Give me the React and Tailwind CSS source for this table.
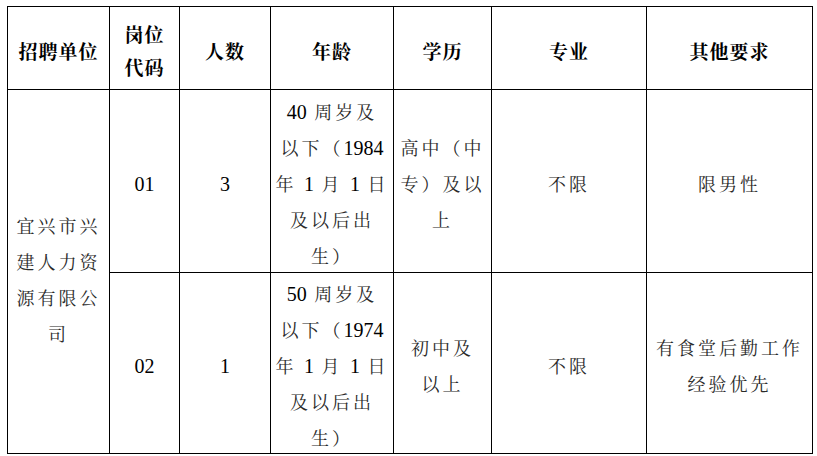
import React from "react";

const font = {
  fontFamily: '"Liberation Serif", "Noto Serif CJK SC", "Noto Sans CJK SC", serif',
};

const cols = [102, 70, 91, 123, 98, 155, 166];

const headers = [["招聘单位"], ["岗位", "代码"], ["人数"], ["年龄"], ["学历"], ["专业"], ["其他要求"]];

const rows = [
  {
    code: "01",
    count: "3",
    age: ["40 周岁及", "以下（1984", "年 1 月 1 日", "及以后出", "生）"],
    edu: ["高中（中", "专）及以", "上"],
    major: ["不限"],
    other: ["限男性"],
  },
  {
    code: "02",
    count: "1",
    age: ["50 周岁及", "以下（1974", "年 1 月 1 日", "及以后出", "生）"],
    edu: ["初中及", "以上"],
    major: ["不限"],
    other: ["有食堂后勤工作", "经验优先"],
  },
];

// digits in the Word doc are not spread by the CJK grid spacing
const Text = ({ s }) =>
  s.split(/(\d+)/).map((part, i) =>
    /^\d+$/.test(part) ? (
      <span key={i} className="tracking-normal text-[20px] leading-none text-black">
        {part}
      </span>
    ) : (
      <span key={i}>{part}</span>
    )
  );

// taller leading than box height pushes the glyphs a few px down, like Word's baseline
const Lines = ({ lines, lineClass = "h-[36px] leading-[44px]" }) => (
  <div>
    {lines.map((l, i) => (
      <div key={i} className={`whitespace-nowrap ${lineClass}`}>
        <Text s={l} />
      </div>
    ))}
  </div>
);

const cell = "border border-black text-center align-middle p-0";

export default function App() {
  return (
    <div className="bg-white w-[817px] h-[456px] pt-[6px] pl-[7px]" style={font}>
      <table className="table-fixed border-collapse w-[805px] text-[#2a2a2a]">
        <colgroup>
          {cols.map((w, i) => (
            <col key={i} style={{ width: w }} />
          ))}
        </colgroup>
        <thead>
          <tr className="h-[83px]">
            {headers.map((h, i) => (
              <th key={i} className={`${cell} font-bold text-[19px] tracking-[1px] text-black`}>
                <Lines lines={h} lineClass="h-[33px] leading-[41px]" />
              </th>
            ))}
          </tr>
        </thead>
        <tbody className="text-[18px] tracking-[3px]">
          {rows.map((r, i) => (
            <tr key={i} className={i === 0 ? "h-[183px]" : "h-[179px]"}>
              {i === 0 && (
                <td rowSpan={2} className={`${cell} pt-[10px]`}>
                  <Lines lines={["宜兴市兴", "建人力资", "源有限公", "司"]} />
                </td>
              )}
              <td className={cell}>
                <Lines lines={[r.code]} />
              </td>
              <td className={cell}>
                <Lines lines={[r.count]} />
              </td>
              <td className={cell}>
                <Lines lines={r.age} />
              </td>
              <td className={cell}>
                <Lines lines={r.edu} />
              </td>
              <td className={cell}>
                <Lines lines={r.major} />
              </td>
              <td className={cell}>
                <Lines lines={r.other} />
              </td>
            </tr>
          ))}
        </tbody>
      </table>
    </div>
  );
}
